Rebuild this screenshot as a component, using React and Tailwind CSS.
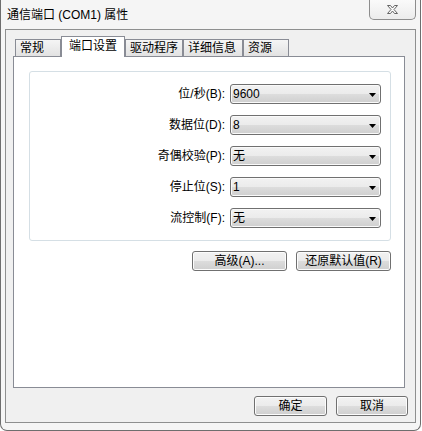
const FONT = "[font-family:'Liberation_Sans','Noto_Sans_CJK_SC',sans-serif]";

const rows = [
  { label: '位/秒(B):', value: '9600' },
  { label: '数据位(D):', value: '8' },
  { label: '奇偶校验(P):', value: '无' },
  { label: '停止位(S):', value: '1' },
  { label: '流控制(F):', value: '无' },
];

const tabs = [
  { name: '常规', w: 'w-[46px]' },
  { name: '端口设置', w: 'w-[64px]', active: true },
  { name: '驱动程序', w: 'w-[58px]' },
  { name: '详细信息', w: 'w-[60px]' },
  { name: '资源', w: 'w-[46px]' },
];

function Combo({ value }) {
  return (
    <div className="flex h-[20px] w-[151px] items-center justify-between rounded-[3px] border border-[#707070] bg-[linear-gradient(to_bottom,#f2f2f2_0%,#ebebeb_50%,#dddddd_50%,#cfcfcf_100%)] pl-[2px] pr-[4px] text-[12px] leading-none text-black shadow-[inset_0_0_0_1px_#fafafa]">
      <span>{value}</span>
      <svg width="7" height="4" viewBox="0 0 7 4" className="mt-px">
        <path d="M0 0h7L3.5 4z" fill="#000" />
      </svg>
    </div>
  );
}

function Button({ children, w }) {
  return (
    <div
      className={`flex h-[20px] ${w} items-center justify-center rounded-[3px] border border-[#707070] bg-[linear-gradient(to_bottom,#f2f2f2_0%,#ebebeb_50%,#dddddd_50%,#cfcfcf_100%)] text-[12px] leading-none text-black shadow-[inset_0_0_0_1px_#fcfcfc]`}
    >
      {children}
    </div>
  );
}

export default function App() {
  return (
    <div className={`h-[431px] w-[422px] overflow-hidden bg-white ${FONT}`}>
      <div className="flex h-[431px] w-[421px] flex-col rounded-b-[7px] border-x border-b border-[#6e6e6e] bg-[#f5f5f5]">
        {/* title bar */}
        <div className="flex h-[29px] items-start">
          <span className="mt-[8px] ml-[6px] text-[12px] leading-[14px] text-black">通信端口 (COM1) 属性</span>
          <div className="mr-[4px] ml-auto flex h-[20px] w-[47px] items-center justify-center rounded-b-[5px] border border-t-0 border-[#8d8d8d] bg-[linear-gradient(to_bottom,#fafafa,#ececec)]">
            <svg width="13" height="11" viewBox="0 0 13 11">
              <path
                d="M1.5 1.5H4.5L6.5 4L8.5 1.5H11.5L8 5.5L11.5 9.5H8.5L6.5 7L4.5 9.5H1.5L5 5.5Z"
                fill="#fbfbfb"
                stroke="#666"
                strokeWidth="1"
                strokeLinejoin="round"
              />
            </svg>
          </div>
        </div>

        {/* client area */}
        <div className="mx-[4px] flex h-[394px] flex-col border border-[#8e8f8f] bg-[#f0f0f0] pt-[6px] pl-[7px]">
          <div className="relative z-10 -mb-px ml-[2px] flex h-[21px] items-end">
            {tabs.map((t) =>
              t.active ? (
                <div
                  key={t.name}
                  className={`flex h-[21px] ${t.w} items-start border border-b-0 border-[#898c95] bg-white pt-[2px] pl-[7px] text-[12px] leading-[15px] text-black`}
                >
                  {t.name}
                </div>
              ) : (
                <div
                  key={t.name}
                  className={`mb-px flex h-[17px] ${t.w} items-center border border-b-0 border-[#898c95] bg-[linear-gradient(to_bottom,#f5f5f5,#e2e2e2)] pl-[4px] text-[12px] leading-none text-black`}
                >
                  {t.name}
                </div>
              )
            )}
          </div>

          <div className="h-[332px] w-[392px] border border-[#898c95] bg-white pt-[14px] pl-[15px]">
            <div className="flex h-[170px] w-[362px] flex-col gap-[11px] rounded-[3px] border border-[#d5dfe5] pt-[12px] pr-[9px]">
              {rows.map((r) => (
                <div key={r.label} className="flex h-[20px] items-center justify-end gap-[5px]">
                  <span className="text-[12px] leading-none text-black">{r.label}</span>
                  <Combo value={r.value} />
                </div>
              ))}
            </div>
            <div className="mt-[10px] flex w-[362px] justify-end gap-[9px]">
              <Button w="w-[95px]">高级(A)...</Button>
              <Button w="w-[95px]">还原默认值(R)</Button>
            </div>
          </div>

          <div className="mt-[8px] flex justify-end gap-[9px] pr-[7px]">
            <Button w="w-[73px]">确定</Button>
            <Button w="w-[72px]">取消</Button>
          </div>
        </div>
      </div>
    </div>
  );
}
